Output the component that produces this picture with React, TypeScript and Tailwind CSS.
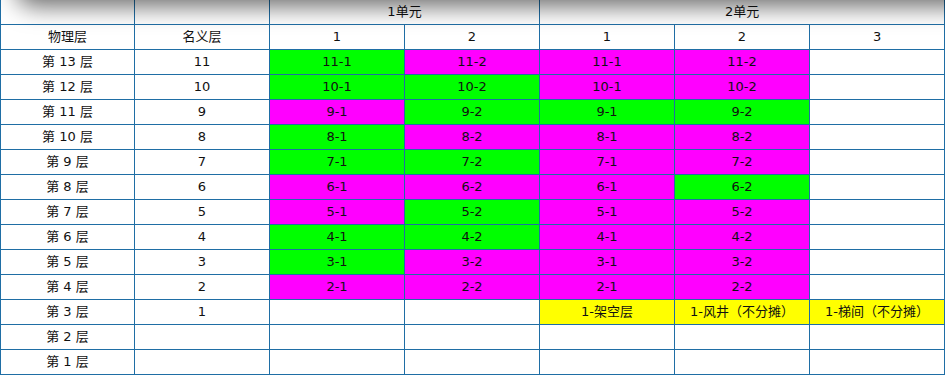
import React from "react";

type C = "G" | "M" | "Y" | "";

const rows: { phys: string; nom: string; cells: [C, string][] }[] = [
  { phys: "第 13 层", nom: "11", cells: [["G", "11-1"], ["M", "11-2"], ["M", "11-1"], ["M", "11-2"], ["", ""]] },
  { phys: "第 12 层", nom: "10", cells: [["G", "10-1"], ["G", "10-2"], ["M", "10-1"], ["M", "10-2"], ["", ""]] },
  { phys: "第 11 层", nom: "9", cells: [["M", "9-1"], ["G", "9-2"], ["G", "9-1"], ["G", "9-2"], ["", ""]] },
  { phys: "第 10 层", nom: "8", cells: [["G", "8-1"], ["M", "8-2"], ["M", "8-1"], ["M", "8-2"], ["", ""]] },
  { phys: "第 9 层", nom: "7", cells: [["G", "7-1"], ["G", "7-2"], ["M", "7-1"], ["M", "7-2"], ["", ""]] },
  { phys: "第 8 层", nom: "6", cells: [["M", "6-1"], ["M", "6-2"], ["M", "6-1"], ["G", "6-2"], ["", ""]] },
  { phys: "第 7 层", nom: "5", cells: [["M", "5-1"], ["G", "5-2"], ["M", "5-1"], ["M", "5-2"], ["", ""]] },
  { phys: "第 6 层", nom: "4", cells: [["G", "4-1"], ["G", "4-2"], ["M", "4-1"], ["M", "4-2"], ["", ""]] },
  { phys: "第 5 层", nom: "3", cells: [["G", "3-1"], ["M", "3-2"], ["M", "3-1"], ["M", "3-2"], ["", ""]] },
  { phys: "第 4 层", nom: "2", cells: [["M", "2-1"], ["M", "2-2"], ["M", "2-1"], ["M", "2-2"], ["", ""]] },
  { phys: "第 3 层", nom: "1", cells: [["", ""], ["", ""], ["Y", "1-架空层"], ["Y", "1-风井（不分摊）"], ["Y", "1-梯间（不分摊）"]] },
  { phys: "第 2 层", nom: "", cells: [["", ""], ["", ""], ["", ""], ["", ""], ["", ""]] },
  { phys: "第 1 层", nom: "", cells: [["", ""], ["", ""], ["", ""], ["", ""], ["", ""]] },
];

const bg = (c: C) =>
  c === "G" ? "bg-[#00ff00]" : c === "M" ? "bg-[#ff00ff]" : c === "Y" ? "bg-[#ffff00]" : "bg-white";

const td = "border border-[#1f6ea5] h-[25px] p-0 text-center align-middle whitespace-nowrap";

export default function App() {
  return (
    <div
      className="relative w-[945px] h-[377px] overflow-hidden bg-white text-[13px] leading-[16px] text-[#111]"
      style={{ fontFamily: '"DejaVu Sans", "Noto Sans CJK SC", sans-serif' }}
    >
      <table className="-mt-px table-fixed border-collapse w-[944px]">
        <colgroup>
          <col className="w-[134px]" />
          <col className="w-[135px]" />
          <col className="w-[135px]" />
          <col className="w-[135px]" />
          <col className="w-[135px]" />
          <col className="w-[135px]" />
          <col className="w-[135px]" />
        </colgroup>
        <tbody>
          <tr>
            <td className={td}></td>
            <td className={td}></td>
            <td className={td} colSpan={2}>1单元</td>
            <td className={td} colSpan={3}>2单元</td>
          </tr>
          <tr>
            <td className={td}>物理层</td>
            <td className={td}>名义层</td>
            <td className={td}>1</td>
            <td className={td}>2</td>
            <td className={td}>1</td>
            <td className={td}>2</td>
            <td className={td}>3</td>
          </tr>
          {rows.map((r, i) => (
            <tr key={i}>
              <td className={td}>{r.phys}</td>
              <td className={td}>{r.nom}</td>
              {r.cells.map(([c, t], j) => (
                <td key={j} className={`${td} ${bg(c)}`}>{t}</td>
              ))}
            </tr>
          ))}
        </tbody>
      </table>
      <div className="pointer-events-none absolute left-[22px] right-[-40px] top-[-30px] h-[30px] rounded-[12px] bg-white shadow-[0_0_24px_6px_rgba(0,0,0,0.6)]" />
    </div>
  );
}
